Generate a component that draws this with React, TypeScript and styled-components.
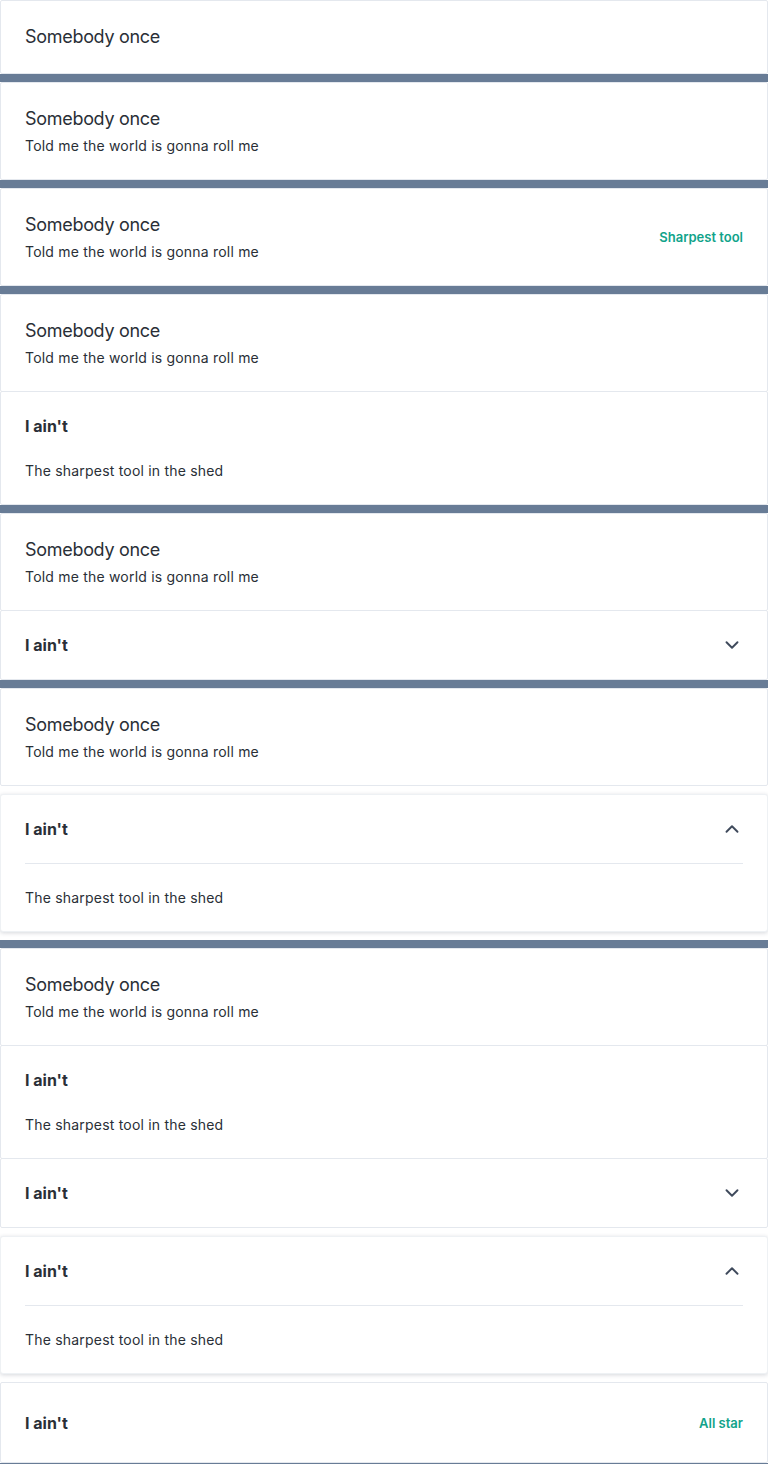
import React from 'react';
import styled, { createGlobalStyle } from 'styled-components';
import { ChevronDown, ChevronUp } from 'lucide-react';

const GlobalStyle = createGlobalStyle`
  html, body {
    margin: 0;
    padding: 0;
    background: #687c96;
  }
  body {
    font-family: Inter, "Noto Sans", "Liberation Sans", sans-serif;
    color: #2a2f37;
    -webkit-font-smoothing: antialiased;
  }
`;

type ItemProps = {
  title: string;
  body?: string;
  chevron?: 'up' | 'down';
  raised?: boolean;
  aside?: string;
  tall?: boolean;
};

const TITLE = 'Somebody once';
const SUB = 'Told me the world is gonna roll me';
const ITEM = "I ain't";
const ITEM_BODY = 'The sharpest tool in the shed';

const Header = ({ sub, aside }: { sub?: boolean; aside?: string }): React.JSX.Element => (
  <HeaderCard>
    <HeaderText>
      <HeaderTitle>{TITLE}</HeaderTitle>
      {sub && <HeaderSub>{SUB}</HeaderSub>}
    </HeaderText>
    {aside && <Aside>{aside}</Aside>}
  </HeaderCard>
);

const Item = ({ title, body, chevron, raised, aside, tall }: ItemProps): React.JSX.Element => (
  <ItemCard $raised={raised} $tall={tall}>
    <ItemHead>
      <ItemTitle>{title}</ItemTitle>
      {chevron === 'down' && <ChevronDown size={22} strokeWidth={2.1} color="#3f4a5c" />}
      {chevron === 'up' && <ChevronUp size={22} strokeWidth={2.1} color="#3f4a5c" />}
      {aside && <Aside>{aside}</Aside>}
    </ItemHead>
    {body && raised && <Divider />}
    {body && <ItemBody>{body}</ItemBody>}
  </ItemCard>
);

export default function App(): React.JSX.Element {
  return (
    <Page>
      <GlobalStyle />
      <Group>
        <Header />
      </Group>
      <Group>
        <Header sub />
      </Group>
      <Group>
        <Header sub aside="Sharpest tool" />
      </Group>
      <Group>
        <Header sub />
        <Item title={ITEM} body={ITEM_BODY} />
      </Group>
      <Group>
        <Header sub />
        <Item title={ITEM} chevron="down" />
      </Group>
      <Group>
        <Header sub />
        <Item title={ITEM} body={ITEM_BODY} chevron="up" raised />
      </Group>
      <Group>
        <Header sub />
        <Item title={ITEM} body={ITEM_BODY} />
        <Item title={ITEM} chevron="down" />
        <Item title={ITEM} body={ITEM_BODY} chevron="up" raised />
        <Item title={ITEM} aside="All star" tall />
      </Group>
    </Page>
  );
}

const Page = styled.main`
  display: flex;
  flex-direction: column;
  gap: 8px;
  width: 768px;
`;

const Group = styled.section`
  display: flex;
  flex-direction: column;
  background: #ffffff;
`;

const HeaderCard = styled.div`
  display: flex;
  align-items: center;
  justify-content: space-between;
  padding: 23px 24px;
  border: 1px solid #e4e8ee;
  border-radius: 2px;
  background: #ffffff;
`;

const HeaderText = styled.div`
  display: flex;
  flex-direction: column;
`;

const HeaderTitle = styled.div`
  font-size: 18px;
  line-height: 26px;
  font-weight: 400;
  letter-spacing: -0.3px;
`;

const HeaderSub = styled.div`
  margin-top: 4px;
  font-size: 14px;
  line-height: 20px;
  letter-spacing: 0.2px;
`;

const Aside = styled.span`
  font-size: 13px;
  line-height: 20px;
  font-weight: 600;
  color: #11a38a;
`;

const ItemCard = styled.div<{ $raised?: boolean; $tall?: boolean }>`
  display: flex;
  flex-direction: column;
  padding: ${(p) => (p.$tall ? '29px 24px 28px' : '23px 24px')};
  border: 1px solid ${(p) => (p.$raised ? '#eef1f4' : '#e4e8ee')};
  border-radius: ${(p) => (p.$raised ? '3px' : '2px')};
  background: #ffffff;
  margin-top: ${(p) => (p.$raised ? '8px' : p.$tall ? '0' : '-1px')};
  margin-bottom: ${(p) => (p.$raised ? '8px' : '0')};
  box-shadow: ${(p) => (p.$raised ? '0 1px 4px rgba(30, 40, 60, 0.18)' : 'none')};
`;

const ItemHead = styled.div`
  display: flex;
  align-items: center;
  justify-content: space-between;
  height: 22px;
`;

const ItemTitle = styled.div`
  font-size: 16px;
  line-height: 22px;
  font-weight: 700;
`;

const Divider = styled.hr`
  margin: 23px 0 0;
  border: none;
  border-top: 1px solid #e4e8ee;
`;

const ItemBody = styled.div`
  margin-top: 24px;
  font-size: 14px;
  line-height: 20px;
  letter-spacing: 0.2px;
`;
